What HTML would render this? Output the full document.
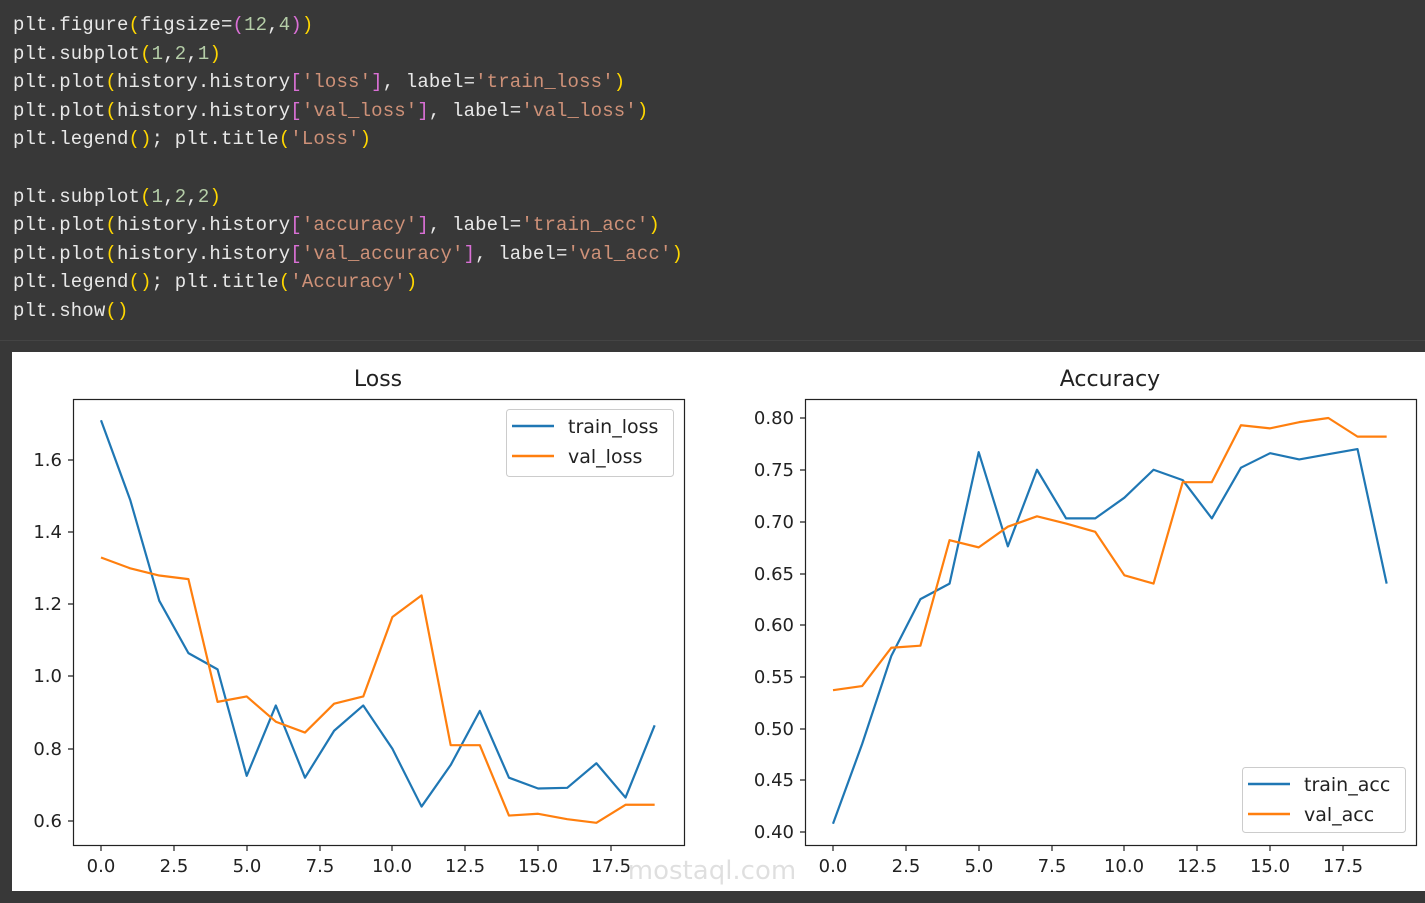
<!DOCTYPE html>
<html><head><meta charset="utf-8"><style>
html,body{margin:0;padding:0;background:#383838;width:1425px;height:903px;overflow:hidden}
.code{position:absolute;left:13px;top:11px;font-family:"Liberation Mono",monospace;font-size:19px;line-height:28.6px;letter-spacing:0.15px;color:#e8e8e8;white-space:pre}
.y{color:#ffd700}.m{color:#da70d6}.s{color:#ce9178}.n{color:#b5cea8}
.sep{position:absolute;left:0;top:340px;width:1425px;height:1px;background:#444}
svg{position:absolute;left:0;top:0}
text{font-family:"DejaVu Sans",sans-serif;fill:#222}
</style></head><body>
<div class="code">plt.figure<span class="y">(</span>figsize=<span class="m">(</span><span class="n">12</span>,<span class="n">4</span><span class="m">)</span><span class="y">)</span>
plt.subplot<span class="y">(</span><span class="n">1</span>,<span class="n">2</span>,<span class="n">1</span><span class="y">)</span>
plt.plot<span class="y">(</span>history.history<span class="m">[</span><span class="s">'loss'</span><span class="m">]</span>, label=<span class="s">'train_loss'</span><span class="y">)</span>
plt.plot<span class="y">(</span>history.history<span class="m">[</span><span class="s">'val_loss'</span><span class="m">]</span>, label=<span class="s">'val_loss'</span><span class="y">)</span>
plt.legend<span class="y">()</span>; plt.title<span class="y">(</span><span class="s">'Loss'</span><span class="y">)</span>

plt.subplot<span class="y">(</span><span class="n">1</span>,<span class="n">2</span>,<span class="n">2</span><span class="y">)</span>
plt.plot<span class="y">(</span>history.history<span class="m">[</span><span class="s">'accuracy'</span><span class="m">]</span>, label=<span class="s">'train_acc'</span><span class="y">)</span>
plt.plot<span class="y">(</span>history.history<span class="m">[</span><span class="s">'val_accuracy'</span><span class="m">]</span>, label=<span class="s">'val_acc'</span><span class="y">)</span>
plt.legend<span class="y">()</span>; plt.title<span class="y">(</span><span class="s">'Accuracy'</span><span class="y">)</span>
plt.show<span class="y">()</span></div>
<div class="sep"></div>
<svg width="1425" height="903" viewBox="0 0 1425 903">
<rect x="12" y="352" width="1413" height="539" fill="#fff"/>
<text x="378" y="386" font-size="22" text-anchor="middle">Loss</text>
<g stroke-width="2.2" fill="none" stroke-linejoin="round">
<g transform="matrix(29.14 0 0 -361 101 1037.6)">
<polyline vector-effect="non-scaling-stroke" stroke="#1f77b4" points="0,1.71 1,1.49 2,1.21 3,1.065 4,1.02 5,0.725 6,0.92 7,0.72 8,0.85 9,0.92 10,0.80 11,0.64 12,0.755 13,0.905 14,0.72 15,0.69 16,0.692 17,0.76 18,0.665 19,0.865"/>
<polyline vector-effect="non-scaling-stroke" stroke="#ff7f0e" points="0,1.33 1,1.30 2,1.28 3,1.27 4,0.93 5,0.945 6,0.875 7,0.845 8,0.925 9,0.945 10,1.165 11,1.225 12,0.81 13,0.81 14,0.615 15,0.62 16,0.605 17,0.595 18,0.645 19,0.645"/>
</g>
<g transform="matrix(29.14 0 0 -1035 833 1246)">
<polyline vector-effect="non-scaling-stroke" stroke="#1f77b4" points="0,0.408 1,0.485 2,0.57 3,0.625 4,0.64 5,0.767 6,0.676 7,0.75 8,0.703 9,0.703 10,0.723 11,0.75 12,0.74 13,0.703 14,0.752 15,0.766 16,0.76 17,0.765 18,0.77 19,0.64"/>
<polyline vector-effect="non-scaling-stroke" stroke="#ff7f0e" points="0,0.537 1,0.541 2,0.578 3,0.58 4,0.682 5,0.675 6,0.695 7,0.705 8,0.698 9,0.69 10,0.648 11,0.64 12,0.738 13,0.738 14,0.793 15,0.79 16,0.796 17,0.80 18,0.782 19,0.782"/>
</g>
</g>
<rect x="73.5" y="399.5" width="611" height="446" fill="none" stroke="#222" stroke-width="1.2"/>
<rect x="805.5" y="399.5" width="611" height="446" fill="none" stroke="#222" stroke-width="1.2"/>
<g stroke="#222" stroke-width="1.2">
<path d="M68 460H73M68 532H73M68 604H73M68 676H73M68 749H73M68 821H73"/>
<path d="M101 846V851M174 846V851M247 846V851M320 846V851M392 846V851M465 846V851M538 846V851M611 846V851"/>
<path d="M800 418H805M800 470H805M800 522H805M800 574H805M800 625H805M800 677H805M800 729H805M800 780H805M800 832H805"/>
<path d="M833 846V851M906 846V851M979 846V851M1052 846V851M1124 846V851M1197 846V851M1270 846V851M1343 846V851"/>
</g>
<g font-size="18" text-anchor="end">
<text x="62" y="466">1.6</text><text x="62" y="538">1.4</text><text x="62" y="610">1.2</text><text x="62" y="682">1.0</text><text x="62" y="755">0.8</text><text x="62" y="827">0.6</text>
<text x="794" y="424">0.80</text><text x="794" y="476">0.75</text><text x="794" y="528">0.70</text><text x="794" y="580">0.65</text><text x="794" y="631">0.60</text><text x="794" y="683">0.55</text><text x="794" y="735">0.50</text><text x="794" y="786">0.45</text><text x="794" y="838">0.40</text>
</g>
<g font-size="18" text-anchor="middle">
<text x="101" y="872">0.0</text><text x="174" y="872">2.5</text><text x="247" y="872">5.0</text><text x="320" y="872">7.5</text><text x="392" y="872">10.0</text><text x="465" y="872">12.5</text><text x="538" y="872">15.0</text><text x="611" y="872">17.5</text>
<text x="833" y="872">0.0</text><text x="906" y="872">2.5</text><text x="979" y="872">5.0</text><text x="1052" y="872">7.5</text><text x="1124" y="872">10.0</text><text x="1197" y="872">12.5</text><text x="1270" y="872">15.0</text><text x="1343" y="872">17.5</text>
</g>
<text x="1110" y="386" font-size="22" text-anchor="middle">Accuracy</text>
<rect x="506.5" y="409.5" width="167" height="67" rx="3" fill="#fff" stroke="#ccc"/>
<path d="M512 426H554" stroke="#1f77b4" stroke-width="2.5"/><path d="M512 456H554" stroke="#ff7f0e" stroke-width="2.5"/>
<text x="568" y="433" font-size="19">train_loss</text><text x="568" y="463" font-size="19">val_loss</text>
<rect x="1242.5" y="767.5" width="163" height="65" rx="3" fill="#fff" stroke="#ccc"/>
<path d="M1248 784H1290" stroke="#1f77b4" stroke-width="2.5"/><path d="M1248 814H1290" stroke="#ff7f0e" stroke-width="2.5"/>
<text x="1304" y="791" font-size="19">train_acc</text><text x="1304" y="821" font-size="19">val_acc</text>
<text x="712" y="879" font-size="26" text-anchor="middle" style="fill:#000;opacity:0.12">mostaql.com</text>
</svg>
</body></html>
